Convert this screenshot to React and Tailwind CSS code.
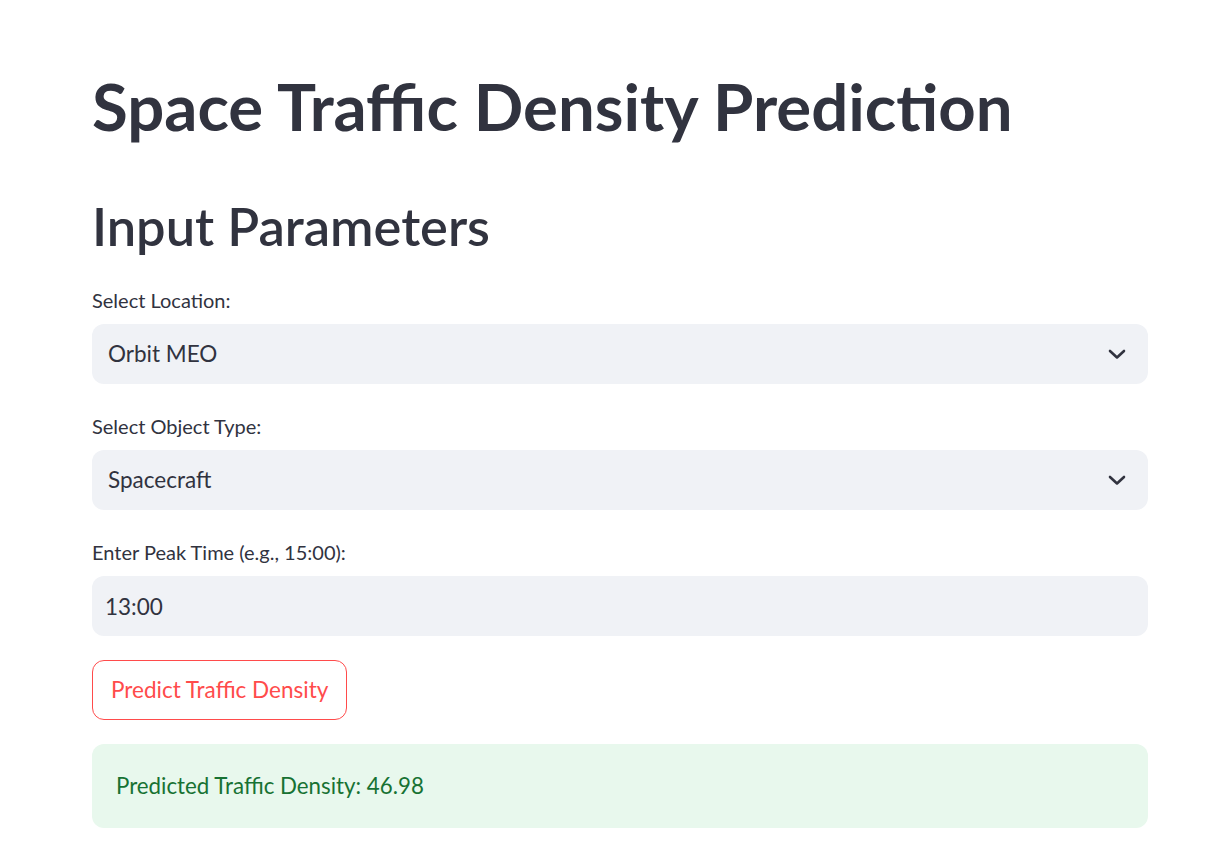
import { useState } from 'react';

function Chevron() {
  return (
    <svg width="18" height="11" viewBox="0 0 18 11" fill="none" stroke="#31333f" strokeWidth="2.6" strokeLinecap="round" strokeLinejoin="round">
      <polyline points="2,2 9,8.5 16,2" />
    </svg>
  );
}

function SelectBox({ label, value }) {
  return (
    <div className="mt-[27px]">
      <label className="block text-[20px] leading-[30px] text-[#31333f]">{label}</label>
      <div className="mt-[9px] flex h-[60px] items-center justify-between rounded-[12px] bg-[#f0f2f6] pl-4 pr-[22px]">
        <span className="text-[22.5px] text-[#31333f]">{value}</span>
        <Chevron />
      </div>
    </div>
  );
}

export default function App() {
  const [time, setTime] = useState('13:00');

  return (
    <div className="min-h-[860px] w-full bg-white" style={{ fontFamily: 'Lato, "Noto Sans", sans-serif' }}>
      <div className="ml-[92px] w-[1056px] pt-[66px]">
        <h1 className="text-[65.3px] font-bold leading-[80px] text-[#31333f]">
          Space Traffic Density Prediction
        </h1>
        <h2 className="mt-[48px] text-[52.4px] font-semibold leading-[64px] text-[#31333f]">
          Input Parameters
        </h2>

        <SelectBox label="Select Location:" value="Orbit MEO" />
        <SelectBox label="Select Object Type:" value="Spacecraft" />

        <div className="mt-[27px]">
          <label className="block text-[20px] leading-[30px] text-[#31333f]">Enter Peak Time (e.g., 15:00):</label>
          <input
            value={time}
            onChange={(e) => setTime(e.target.value)}
            className="mt-[9px] h-[60px] w-full rounded-[12px] bg-[#f0f2f6] px-[13px] text-[22.5px] text-[#31333f] outline-none"
          />
        </div>

        <button className="mt-6 flex h-[60px] items-center rounded-[12px] border border-[#ff4b4b] bg-white px-[18px] text-[22.5px] text-[#ff4b4b]">
          Predict Traffic Density
        </button>

        <div className="mt-6 flex h-[84px] items-center rounded-[12px] bg-[#e8f8ed] px-6">
          <p className="text-[22.3px] text-[#177233]">Predicted Traffic Density: 46.98</p>
        </div>
      </div>
    </div>
  );
}
